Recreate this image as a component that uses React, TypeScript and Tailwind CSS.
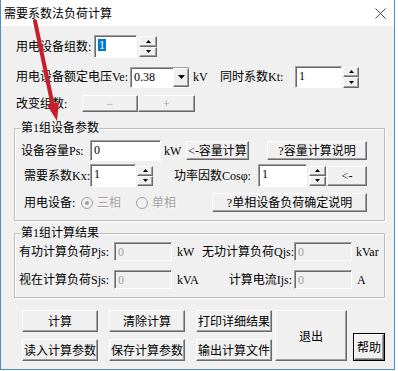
import type { ReactNode } from 'react';

const raised =
  'bg-[#f0f0f0] border border-t-white border-l-white border-r-[#696969] border-b-[#696969] shadow-[inset_-1px_-1px_0_#a0a0a0]';
const sunken =
  'border border-t-[#a0a0a0] border-l-[#a0a0a0] border-r-white border-b-white shadow-[inset_1px_1px_0_#696969]';

function Btn({ className = '', children }: { className?: string; children?: ReactNode }) {
  return (
    <div className={`${raised} shrink-0 flex items-center justify-center text-[12px] leading-[14px] ${className}`}>
      {children}
    </div>
  );
}

function Spin({ className = '' }: { className?: string }) {
  return (
    <div className={`shrink-0 flex flex-col ${className}`}>
      <div className={`${raised} flex-1 flex items-center justify-center`}>
        <svg width="5" height="3" viewBox="0 0 5 3">
          <path d="M2.5 0L5 3H0z" fill="#000" />
        </svg>
      </div>
      <div className={`${raised} flex-1 flex items-center justify-center`}>
        <svg width="5" height="3" viewBox="0 0 5 3">
          <path d="M0 0H5L2.5 3z" fill="#000" />
        </svg>
      </div>
    </div>
  );
}

function Field({ className = '', children, disabled }: { className?: string; children?: ReactNode; disabled?: boolean }) {
  return (
    <div
      className={`${sunken} shrink-0 pl-[3px] pt-[2px] text-[12px] leading-[14px] ${
        disabled ? 'bg-[#f0f0f0] text-[#a0a0a0]' : 'bg-white text-black'
      } ${className}`}
    >
      {children}
    </div>
  );
}

function Radio({ label, checked }: { label: string; checked?: boolean }) {
  return (
    <div className="flex items-center gap-[4px]">
      <div className="w-[12px] h-[12px] rounded-full border border-[#a0a0a0] bg-[#f0f0f0] flex items-center justify-center">
        {checked && <div className="w-[4px] h-[4px] rounded-full bg-[#a0a0a0]" />}
      </div>
      <span className="text-[#a0a0a0] [text-shadow:1px_1px_0_#fff]">{label}</span>
    </div>
  );
}

export default function App() {
  return (
    <div className="relative w-[398px] h-[371px] bg-white overflow-hidden font-['Liberation_Serif','Noto_Sans_CJK_SC',serif] text-[12px] leading-[14px] text-black">
      <div className="w-[395px] h-[370px] flex flex-col border-l border-r border-b border-[#4a8fc0]">
        {/* title bar */}
        <div className="h-[26px] bg-white flex items-center justify-between pl-[3px] pr-[8px]">
          <span className="text-[12px] font-['Noto_Sans_CJK_SC',sans-serif]">需要系数法负荷计算</span>
          <svg width="11" height="11" viewBox="0 0 11 11">
            <path d="M0.5 0.5L10.5 10.5M10.5 0.5L0.5 10.5" stroke="#333" strokeWidth="0.9" />
          </svg>
        </div>

        <div className="flex-1 bg-[#f0f0f0] flex flex-col">
          {/* 组数 */}
          <div className="flex items-center h-[23px] mt-[9px] ml-[15px]">
            <div className="w-[78px] shrink-0">用电设备组数:</div>
            <Field className="w-[43px] h-[23px]">
              <span className="inline-block bg-[#0078d7] text-white px-[1px] leading-[12px]">1</span>
            </Field>
            <Spin className="ml-[2px] w-[18px] h-[21px]" />
          </div>

          {/* 电压 / Kt */}
          <div className="flex items-center h-[24px] mt-[7px] ml-[15px]">
            <div className="w-[114px] shrink-0">用电设备额定电压Ve:</div>
            <div className={`${sunken} bg-white w-[60px] h-[21px] shrink-0 flex`}>
              <div className="flex-1 pl-[3px] pt-[2px]">0.38</div>
              <div className={`${raised} w-[16px] flex items-center justify-center`}>
                <svg width="7" height="4" viewBox="0 0 7 4">
                  <path d="M0 0H7L3.5 4z" fill="#000" />
                </svg>
              </div>
            </div>
            <div className="ml-[3px] w-[14px] shrink-0">kV</div>
            <div className="ml-[13px] w-[75px] shrink-0">同时系数Kt:</div>
            <Field className="w-[47px] h-[22px]">1</Field>
            <Spin className="ml-[1px] w-[16px] h-[21px]" />
          </div>

          {/* 改变组数 */}
          <div className="flex items-center h-[17px] mt-[6px] ml-[15px]">
            <div className="w-[66px] shrink-0">改变组数:</div>
            <Btn className="w-[56px] h-[17px] text-[#a0a0a0]">−</Btn>
            <Btn className="w-[57px] h-[17px] text-[#a0a0a0]">+</Btn>
          </div>

          {/* 第1组设备参数 */}
          <fieldset className="ml-[13px] mt-[8px] w-[371px] h-[101px] border border-[#bcbcbc] shadow-[inset_1px_1px_0_#fff,1px_1px_0_#fff]">
            <legend className="ml-[6px] text-[12px] leading-[16px]">第1组设备参数</legend>
            <div className="flex items-center h-[21px] mt-[4px]">
              <div className="ml-[6px] w-[69px] shrink-0">设备容量Ps:</div>
              <Field className="w-[71px] h-[21px]">0</Field>
              <div className="ml-[3px] w-[22px] shrink-0">kW</div>
              <Btn className="w-[63px] h-[19px]">&lt;-容量计算</Btn>
              <Btn className="ml-[18px] w-[100px] h-[19px]">?容量计算说明</Btn>
            </div>
            <div className="flex items-center h-[23px] mt-[3px]">
              <div className="ml-[9px] w-[66px] shrink-0">需要系数Kx:</div>
              <Field className="w-[46px] h-[23px]">1</Field>
              <Spin className="ml-[1px] w-[16px] h-[20px]" />
              <div className="ml-[21px] w-[84px] shrink-0">功率因数Cosφ:</div>
              <Field className="w-[49px] h-[23px]">1</Field>
              <Spin className="ml-[2px] w-[17px] h-[20px]" />
              <Btn className="ml-[1px] w-[40px] h-[20px]">&lt;-</Btn>
            </div>
            <div className="flex items-center h-[19px] mt-[6px]">
              <div className="ml-[9px] w-[57px] shrink-0">用电设备:</div>
              <div className="w-[55px] shrink-0">
                <Radio label="三相" checked />
              </div>
              <div className="w-[76px] shrink-0">
                <Radio label="单相" />
              </div>
              <Btn className="w-[155px] h-[19px]">?单相设备负荷确定说明</Btn>
            </div>
          </fieldset>

          {/* 第1组计算结果 */}
          <fieldset className="ml-[13px] mt-[4px] w-[371px] h-[73px] border border-[#bcbcbc] shadow-[inset_1px_1px_0_#fff,1px_1px_0_#fff]">
            <legend className="ml-[6px] text-[12px] leading-[16px]">第1组计算结果</legend>
            <div className="flex items-center h-[19px] mt-[1px]">
              <div className="ml-[4px] w-[95px] shrink-0">有功计算负荷Pjs:</div>
              <Field disabled className="w-[58px] h-[19px]">0</Field>
              <div className="ml-[5px] w-[22px] shrink-0">kW</div>
              <div className="w-[95px] shrink-0 text-right">无功计算负荷Qjs:</div>
              <Field disabled className="w-[58px] h-[19px]">0</Field>
              <div className="ml-[4px] shrink-0">kVar</div>
            </div>
            <div className="flex items-center h-[19px] mt-[9px]">
              <div className="ml-[4px] w-[95px] shrink-0">视在计算负荷Sjs:</div>
              <Field disabled className="w-[58px] h-[19px]">0</Field>
              <div className="ml-[5px] w-[42px] shrink-0">kVA</div>
              <div className="w-[75px] shrink-0 text-right pr-[2px]">计算电流Ijs:</div>
              <Field disabled className="w-[58px] h-[19px]">0</Field>
              <div className="ml-[5px] shrink-0">A</div>
            </div>
          </fieldset>

          {/* 底部按钮 */}
          <div className="flex items-start mt-[12px] ml-[21px] font-['Noto_Sans_CJK_SC',sans-serif]">
            <div className="grid grid-cols-3 gap-x-[11px] gap-y-[7px]">
              <Btn className="w-[76px] h-[22px]">计算</Btn>
              <Btn className="w-[76px] h-[22px]">清除计算</Btn>
              <Btn className="w-[76px] h-[22px]">打印详细结果</Btn>
              <Btn className="w-[76px] h-[22px]">读入计算参数</Btn>
              <Btn className="w-[76px] h-[22px]">保存计算参数</Btn>
              <Btn className="w-[76px] h-[22px]">输出计算文件</Btn>
            </div>
            <Btn className="ml-[3px] w-[72px] h-[51px]">退出</Btn>
            <div className="ml-[6px] mt-[23px] border border-black">
              <Btn className="w-[30px] h-[26px]">帮助</Btn>
            </div>
          </div>
        </div>
      </div>

      {/* annotation arrow */}
      <svg className="absolute left-0 top-0 pointer-events-none" width="398" height="371" viewBox="0 0 398 371">
        <line x1="35" y1="21" x2="52.5" y2="104" stroke="#c8202a" strokeWidth="4" strokeLinecap="round" />
        <polygon points="57,121 47,105 59,102" fill="#c8202a" />
      </svg>
    </div>
  );
}
